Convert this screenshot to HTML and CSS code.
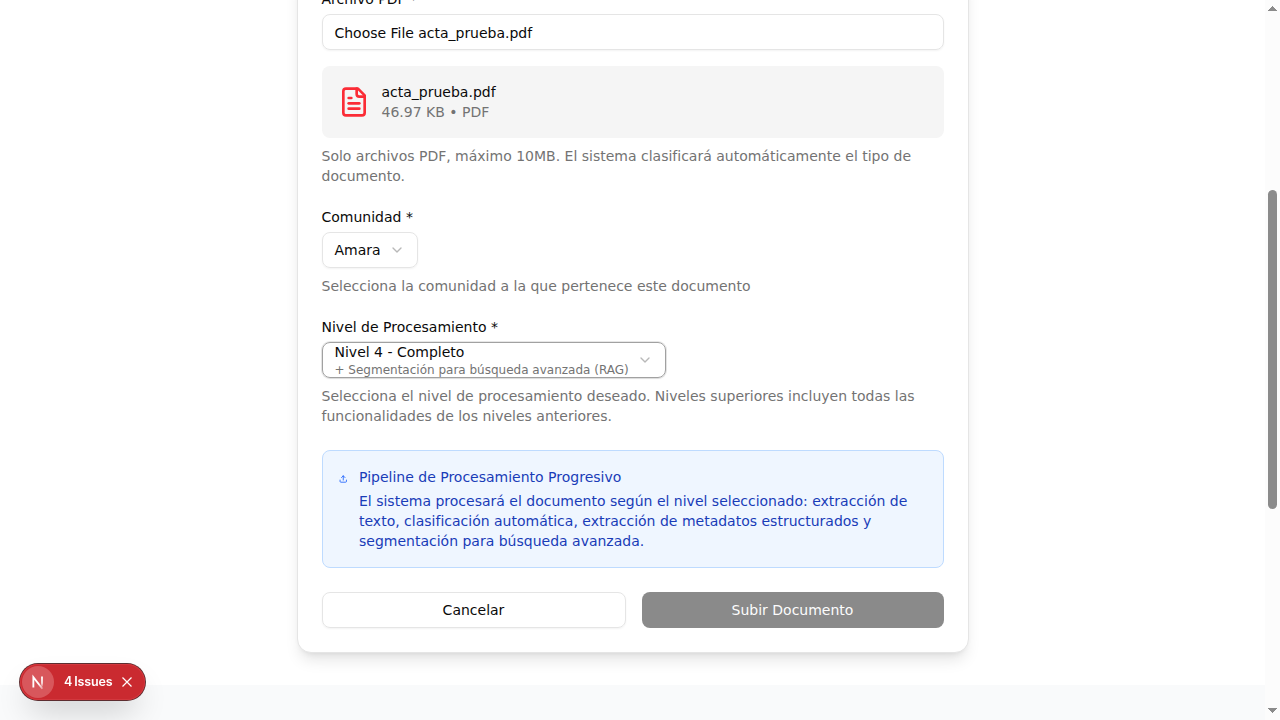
FILE: index.html
```html
<!DOCTYPE html>
<html lang="es">
<head>
<meta charset="utf-8">
<title>Subir Documento</title>
<link rel="stylesheet" href="styles.css">
</head>
<body>
<div class="page">
  <main class="section">
    <form class="card">
      <div class="field">
        <label class="label">Archivo PDF *</label>
        <div class="input">Choose File acta_prueba.pdf</div>
        <div class="file">
          <svg class="file-icon" viewBox="0 0 24 24"><path d="M15 2H6a2 2 0 0 0-2 2v16a2 2 0 0 0 2 2h12a2 2 0 0 0 2-2V7Z"/><path d="M14 2v4a2 2 0 0 0 2 2h4"/><path d="M10 9H8"/><path d="M16 13H8"/><path d="M16 17H8"/></svg>
          <div>
            <p class="file-name">acta_prueba.pdf</p>
            <p class="file-meta">46.97 KB • PDF</p>
          </div>
        </div>
        <p class="hint">Solo archivos PDF, máximo 10MB. El sistema clasificará automáticamente el tipo de documento.</p>
      </div>
      <div class="field">
        <label class="label">Comunidad *</label>
        <div class="select">
          <span>Amara</span>
          <svg class="chevron" viewBox="0 0 24 24"><path d="m6 9 6 6 6-6"/></svg>
        </div>
        <p class="hint">Selecciona la comunidad a la que pertenece este documento</p>
      </div>
      <div class="field">
        <label class="label">Nivel de Procesamiento *</label>
        <div class="select select-focus">
          <div class="level">
            <span class="level-name">Nivel 4 - Completo</span>
            <span class="level-note">+ Segmentación para búsqueda avanzada (RAG)</span>
          </div>
          <svg class="chevron" viewBox="0 0 24 24"><path d="m6 9 6 6 6-6"/></svg>
        </div>
        <p class="hint">Selecciona el nivel de procesamiento deseado. Niveles superiores incluyen todas las funcionalidades de los niveles anteriores.</p>
      </div>
      <div class="info">
        <svg class="info-icon" viewBox="0 0 24 24"><path d="M21 15v4a2 2 0 0 1-2 2H5a2 2 0 0 1-2-2v-4"/><path d="m17 8-5-5-5 5"/><path d="M12 3v12"/></svg>
        <div class="info-body">
          <p>Pipeline de Procesamiento Progresivo</p>
          <p>El sistema procesará el documento según el nivel seleccionado: extracción de texto, clasificación automática, extracción de metadatos estructurados y segmentación para búsqueda avanzada.</p>
        </div>
      </div>
      <div class="actions">
        <div class="button button-outline">Cancelar</div>
        <div class="button button-primary">Subir Documento</div>
      </div>
    </form>
  </main>
  <footer class="footer"></footer>
</div>
<div class="scrollbar">
  <svg class="arrow" viewBox="0 0 9 5" shape-rendering="crispEdges"><path d="M4 0h1v1h1v1h1v1h1v1h1v1H0V4h1V3h1V2h1V1h1z"/></svg>
  <div class="thumb"></div>
  <svg class="arrow arrow-down" viewBox="0 0 9 5" shape-rendering="crispEdges"><path d="M0 0h9v1H8v1H7v1H6v1H5v1H4V4H3V3H2V2H1V1H0z"/></svg>
</div>
<div class="issues">
  <div class="issues-logo">
    <svg viewBox="0 0 40 40" width="32" height="32" fill="none">
      <defs>
        <linearGradient id="stem" x1="0" y1="13" x2="0" y2="27" gradientUnits="userSpaceOnUse"><stop stop-color="#fff"/><stop offset=".6" stop-color="#fff" stop-opacity=".8"/><stop offset="1" stop-color="#fff" stop-opacity="0"/></linearGradient>
        <linearGradient id="slash" x1="21" y1="22" x2="27" y2="29" gradientUnits="userSpaceOnUse"><stop stop-color="#fff"/><stop offset="1" stop-color="#fff" stop-opacity=".3"/></linearGradient>
      </defs>
      <path d="M14.200 27V14L25.500 28.500" stroke="url(#slash)" stroke-width="2.300"/>
      <path d="M25 13v13" stroke="url(#stem)" stroke-width="2.300"/>
    </svg>
  </div>
  <span class="issues-text"><span>4</span> <span>Issues</span></span>
  <svg class="issues-close" viewBox="0 0 10 10"><path d="M.5.5l9 9M9.500.5l-9 9"/></svg>
</div>
</body>
</html>
```

FILE: styles.css
```css
* { box-sizing: border-box; }
body {
  margin: 0;
  height: 720px;
  overflow: hidden;
  display: grid;
  grid-template-columns: 1fr 15px;
  background: #fff;
  color: #0a0a0a;
  font: 14px/20px "DejaVu Sans", sans-serif;
}
p { margin: 0; }
svg { display: block; flex-shrink: 0; }
.page { height: 720px; overflow: hidden; display: flex; flex-direction: column; }
.section { padding-bottom: 32px; margin-top: -33px; }
.card {
  width: 672px;
  margin: 0 auto;
  padding: 24px;
  display: flex;
  flex-direction: column;
  gap: 24px;
  border: 1px solid #e5e5e5;
  border-radius: 14px;
  background: #fff;
  box-shadow: 0 10px 15px -3px rgba(0,0,0,.1), 0 4px 6px -4px rgba(0,0,0,.1);
}
.field { display: flex; flex-direction: column; align-items: flex-start; gap: 8px; }
.label { line-height: 14px; font-weight: 500; }
.input, .select {
  height: 36px;
  border: 1px solid #e5e5e5;
  border-radius: 8px;
  padding: 0 12px;
  display: flex;
  align-items: center;
  gap: 8px;
  box-shadow: 0 1px 2px rgba(0,0,0,.05);
}
.input { width: 100%; padding-top: 2px; letter-spacing: -.02px; }
.select-focus { border-color: #a1a1a1; box-shadow: 0 1px 2px rgba(0,0,0,.05), 0 0 0 1px rgba(161,161,161,.25); }
.chevron { width: 16px; height: 16px; fill: none; stroke: #737373; stroke-width: 2; stroke-linecap: round; stroke-linejoin: round; opacity: .5; }
.level { display: flex; flex-direction: column; }
.level-name { line-height: 20px; }
.level-note { font-size: 12px; line-height: 16px; color: #737373; }
.file {
  width: 100%;
  height: 72px;
  margin-top: 8px;
  padding: 16px;
  display: flex;
  align-items: center;
  gap: 12px;
  border-radius: 8px;
  background: #f5f5f5;
}
.file-icon { width: 32px; height: 32px; fill: none; stroke: #fb2c36; stroke-width: 2; stroke-linecap: round; stroke-linejoin: round; }
.file-meta, .hint { color: #737373; }
.info {
  display: flex;
  gap: 12px;
  padding: 16px;
  border: 1px solid #bedbff;
  border-radius: 8px;
  background: #eff6ff;
  color: #193cb8;
}
.info-icon { width: 8.500px; height: 20px; margin-top: 2px; fill: none; stroke: #155dfc; stroke-width: 2.300; stroke-linecap: round; stroke-linejoin: round; }
.info-body { display: flex; flex-direction: column; gap: 4px; }
.actions { display: flex; gap: 16px; }
.button { flex: 1; height: 36px; padding: 0 16px; display: flex; align-items: center; justify-content: center; border-radius: 8px; }
.button-outline { border: 1px solid #e5e5e5; box-shadow: 0 1px 2px rgba(0,0,0,.05); }
.button-primary { background: #171717; color: #fafafa; opacity: .5; }
.footer { flex: 1; background: #f9fafb; }
.scrollbar { height: 720px; background: #fcfcfc; display: flex; flex-direction: column; align-items: center; padding: 6px 0 7px; }
.arrow { width: 9px; height: 5px; fill: #8b8b8b; }
.thumb { width: 9px; height: 319px; margin-top: 179px; border-radius: 5px; background: #8b8b8b; }
.arrow-down { margin-top: auto; }
.issues {
  position: fixed;
  left: 20px;
  top: 664px;
  width: 125px;
  height: 36px;
  padding: 2px;
  display: flex;
  align-items: center;
  border-radius: 18px;
  background: #ca2a30;
  color: #fff;
  font: 600 12.500px/16px Inter, sans-serif;
  box-shadow: 0 0 0 1px #5c2d30, inset 0 0 0 1px #d3383e, 0 16px 32px -8px rgba(0,0,0,.24);
}
.issues-logo { width: 32px; height: 32px; border-radius: 50%; background: #d8575c; }
.issues-text { display: flex; gap: 2px; margin-left: 10px; width: 53px; letter-spacing: -.15px; }
.issues-close { width: 10px; height: 10px; margin-left: 5px; stroke: #fff; stroke-width: 1.200; }
```
